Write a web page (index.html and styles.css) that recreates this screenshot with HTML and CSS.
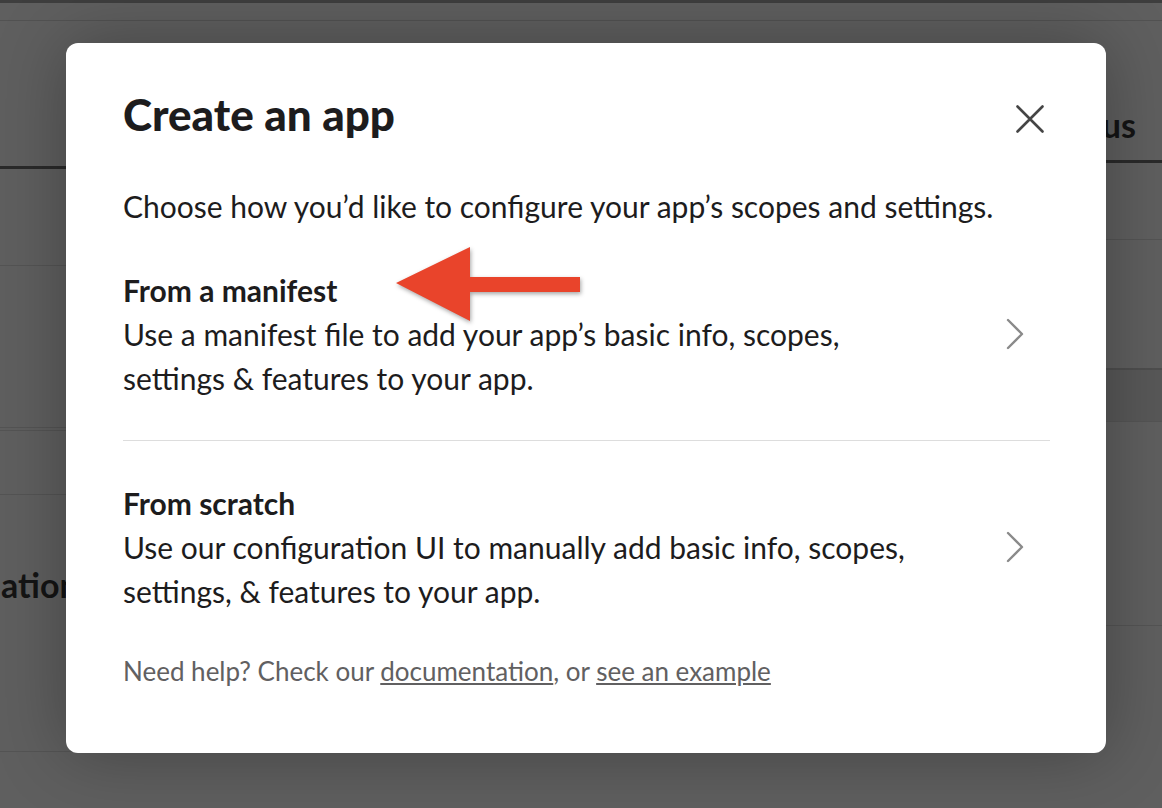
FILE: index.html
```html
<!DOCTYPE html>
<html lang="en">
<head>
    <meta charset="UTF-8">
    <meta name="viewport" content="width=device-width, initial-scale=1.0">
    <title>Create an app</title>
    <link rel="stylesheet" href="styles.css">
</head>
<body>
    <div class="page">
        <!-- page behind the overlay -->
        <div class="backdrop">
            <div class="col col-left">
                <div class="top-strip"></div>
                <div class="nav-strip"></div>
                <div class="head head-left"></div>
                <div class="row row-l1"></div>
                <div class="row row-l2"></div>
                <div class="row row-l3"></div>
                <div class="row row-l4"></div>
                <div class="row row-l5">
                    <span class="bg-label bg-label-left">ation</span>
                </div>
            </div>
            <div class="col col-right">
                <div class="top-strip"></div>
                <div class="nav-strip"></div>
                <div class="head head-right">
                    <span class="bg-label">Status</span>
                </div>
                <div class="row row-r1"></div>
                <div class="row row-r2"></div>
                <div class="row row-r3"></div>
                <div class="row row-r4"></div>
            </div>
        </div>

        <div class="modal">
            <div class="modal-header">
                <h1>Create an app</h1>
                <button type="button" class="close-button" aria-label="Close">
                    <svg width="28" height="28" viewBox="0 0 28 28">
                        <path d="M1.5 1.5 L26.5 26.5 M26.5 1.5 L1.5 26.5" stroke="#454545" stroke-width="2.6" stroke-linecap="round" fill="none"/>
                    </svg>
                </button>
            </div>

            <p class="intro">Choose how you’d like to configure your app’s scopes and settings.</p>

            <div class="option">
                <div class="option-text">
                    <div class="option-title">From a manifest</div>
                    <div class="option-desc">Use a manifest file to add your app’s basic info, scopes, settings &amp; features to your app.</div>
                </div>
                <svg class="chevron" width="20" height="32" viewBox="0 0 20 32">
                    <path d="M3 2 L17 16 L3 30" stroke="#8a8a8a" stroke-width="2.4" stroke-linecap="round" stroke-linejoin="round" fill="none"/>
                </svg>
            </div>

            <div class="option">
                <div class="option-text">
                    <div class="option-title">From scratch</div>
                    <div class="option-desc">Use our configuration UI to manually add basic info, scopes, settings, &amp; features to your app.</div>
                </div>
                <svg class="chevron" width="20" height="32" viewBox="0 0 20 32">
                    <path d="M3 2 L17 16 L3 30" stroke="#8a8a8a" stroke-width="2.4" stroke-linecap="round" stroke-linejoin="round" fill="none"/>
                </svg>
            </div>

            <p class="help">Need help? Check our <a href="#">documentation</a>, or <a href="#">see an example</a></p>

            <!-- annotation arrow -->
            <svg class="arrow" width="190" height="80" viewBox="0 0 190 80">
                <polygon points="0,36 74,0 74,30 184,30 184,45 74,45 74,74" fill="#e9442b"/>
            </svg>
        </div>
    </div>
</body>
</html>
```

FILE: styles.css
```css
body {
    margin: 0;
    font-family: Lato, "Noto Sans", sans-serif;
    background-color: #5f5f5f;
    color: #1d1c1d;
}

.page {
    position: relative;
    width: 1162px;
    height: 808px;
    overflow: hidden;
}

.backdrop {
    display: flex;
    height: 100%;
}

.col {
    flex: 1;
    display: flex;
    flex-direction: column;
}

.top-strip {
    height: 3px;
    background-color: #3e3e3e;
}

.nav-strip {
    height: 17px;
    border-bottom: 1px solid #525252;
}

.head {
    display: flex;
    align-items: flex-end;
    border-bottom: 3px solid #2a2a2a;
}

.head-left {
    height: 145px;
}

.head-right {
    height: 142px;
    justify-content: flex-end;
    padding-right: 26px;
    padding-bottom: 15px;
    box-sizing: border-box;
}

.row {
    border-bottom: 1px solid #545454;
}

.row-l1 { height: 96px; }
.row-l2 { height: 161px; }
.row-l3 { height: 2px; }
.row-l4 { height: 63px; }
.row-l5 {
    height: 256px;
    display: flex;
    align-items: flex-start;
}

.row-r1 { height: 76px; }
.row-r2 {
    height: 128px;
    border-bottom: 2px solid #4e4e4e;
}
.row-r3 {
    height: 51px;
    background-color: #585858;
}
.row-r4 { height: 203px; }

.bg-label {
    font-size: 34px;
    font-weight: 700;
    color: #141414;
    line-height: 40px;
}

.bg-label-left {
    margin-top: 70px;
    margin-left: 1px;
}

.modal {
    position: absolute;
    left: 66px;
    top: 43px;
    width: 1040px;
    height: 710px;
    box-sizing: border-box;
    padding: 43px 56px 0 57px;
    background-color: #fff;
    border-radius: 12px;
    box-shadow: 0 0 70px rgba(0, 0, 0, 0.3);
}

.modal-header {
    display: flex;
    justify-content: space-between;
    align-items: flex-start;
}

h1 {
    margin: 0;
    font-size: 44px;
    line-height: 56px;
    font-weight: 900;
}

.close-button {
    width: 40px;
    height: 40px;
    margin-top: 13px;
    padding: 0;
    border: none;
    background: none;
    display: flex;
    align-items: center;
    justify-content: center;
    cursor: pointer;
}

.intro {
    margin: 42px 0 0;
    font-size: 30px;
    line-height: 44px;
}

.option {
    display: flex;
    align-items: center;
    justify-content: space-between;
    padding: 40px 0;
    font-size: 30px;
    line-height: 44px;
}

.option + .option {
    border-top: 1px solid #dddddd;
}

.option-text {
    max-width: 800px;
}

.option-title {
    font-weight: 700;
}

.chevron {
    margin-right: 25px;
    flex-shrink: 0;
}

.help {
    margin: 0;
    font-size: 26px;
    line-height: 36px;
    color: #616061;
}

.help a {
    color: inherit;
}

.arrow {
    position: absolute;
    left: 330px;
    top: 204px;
    filter: drop-shadow(1px 2px 2px rgba(0, 0, 0, 0.35));
}
```
